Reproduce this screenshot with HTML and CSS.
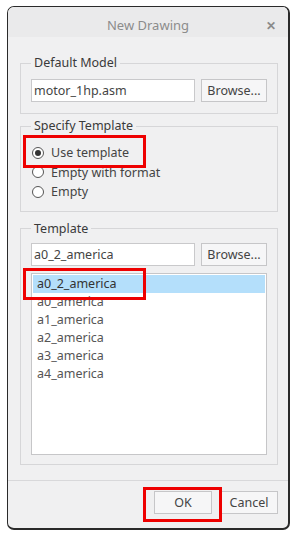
FILE: index.html
```html
<!DOCTYPE html>
<html>
<head>
<meta charset="utf-8">
<link rel="stylesheet" href="styles.css">
</head>
<body>
<div class="window">
  <div class="titlebar">
    <span class="title">New Drawing</span>
    <span class="close">✕</span>
  </div>
  <div class="content">
    <fieldset class="group g1">
      <legend>Default Model</legend>
      <div class="row">
        <div class="input">motor_1hp.asm</div>
        <div class="btn browse">Browse...</div>
      </div>
    </fieldset>
    <fieldset class="group g2">
      <legend>Specify Template</legend>
      <div class="radio"><span class="dot on"></span>Use template</div>
      <div class="radio"><span class="dot"></span>Empty with format</div>
      <div class="radio"><span class="dot"></span>Empty</div>
    </fieldset>
    <fieldset class="group g3">
      <legend>Template</legend>
      <div class="row">
        <div class="input">a0_2_america</div>
        <div class="btn browse">Browse...</div>
      </div>
      <div class="list">
        <div class="item sel">a0_2_america</div>
        <div class="item">a0_america</div>
        <div class="item">a1_america</div>
        <div class="item">a2_america</div>
        <div class="item">a3_america</div>
        <div class="item">a4_america</div>
      </div>
    </fieldset>
  </div>
  <div class="footer">
    <div class="btn action">OK</div>
    <div class="btn action">Cancel</div>
  </div>
  <div class="mark mark-radio"></div>
  <div class="mark mark-item"></div>
  <div class="mark mark-ok"></div>
</div>
</body>
</html>
```
FILE: styles.css
```css
* { box-sizing: border-box; }
html, body { margin: 0; padding: 0; background: #ffffff; }
body {
  font-family: "Noto Sans", "Open Sans", sans-serif;
  font-size: 12px;
  color: #444;
  padding: 6px 0 0 7px;
}
.window {
  position: relative;
  width: 283px;
  height: 524px;
  border: 1px solid #2a2a2a;
  border-bottom-width: 2px;
  border-right-width: 2px;
  border-radius: 7px;
  background: #f0f0f1;
  overflow: hidden;
  display: flex;
  flex-direction: column;
}
.titlebar {
  height: 30px;
  padding-top: 5px;
  background: #eaeaeb;
  display: flex;
  align-items: center;
  justify-content: center;
  position: relative;
  flex: none;
}
.title { color: #8c8c8c; font-size: 13px; }
.close {
  position: absolute;
  right: 12px;
  top: 10px;
  color: #8a8a8a;
  font-size: 12px;
  font-weight: bold;
}
.content {
  padding: 18px 10px 0 12px;
  display: flex;
  flex-direction: column;
  gap: 4px;
  flex: 1;
}
.group {
  margin: 0;
  min-width: 0;
  width: 258px;
  border: 1px solid #d6d6d8;
  padding: 8px 10px 10px 10px;
}
.group legend {
  margin-left: 0;
  padding: 0 3px;
  line-height: 16px;
  color: #3a3a3a;
  font-size: 12.5px;
}
.g1 { padding-top: 8px; padding-bottom: 11px; }
.g2 { padding: 9px 10px 9px 11px; }
.g2 legend { margin-left: -1px; }
.g3 { margin-top: 5px; padding-top: 6px; padding-bottom: 9px; }
.row { display: flex; gap: 6px; }
.input {
  width: 164px;
  height: 23px;
  background: #fff;
  border: 1px solid #c9c9cb;
  padding: 0 2px;
  line-height: 21px;
  color: #444;
  font-size: 12.5px;
}
.btn {
  height: 23px;
  border: 1px solid #c6c6c8;
  background: #f6f6f7;
  display: flex;
  align-items: center;
  justify-content: center;
  color: #444;
  font-size: 12.5px;
}
.browse { width: 66px; }
.radio {
  display: flex;
  align-items: center;
  height: 19.5px;
  font-size: 12.5px;
  color: #444;
}
.dot {
  width: 12px;
  height: 12px;
  border: 1px solid #555;
  border-radius: 50%;
  margin-right: 7px;
  background: #fff;
  display: flex;
  align-items: center;
  justify-content: center;
}
.dot.on::after {
  content: "";
  width: 6px;
  height: 6px;
  border-radius: 50%;
  background: #333;
}
.list {
  margin-top: 7px;
  width: 236px;
  height: 182px;
  border: 1px solid #c6c6c8;
  background: #fff;
  padding: 1px;
}
.item {
  height: 18px;
  line-height: 18px;
  padding-left: 4px;
  color: #555;
  font-size: 12.5px;
}
.item.sel { background: #b4dffb; color: #333; }
.footer {
  flex: none;
  height: 48px;
  border-top: 1px solid #d8d8da;
  display: flex;
  justify-content: flex-end;
  gap: 8px;
  padding: 10px 10px 0 0;
}
.action { width: 58px; }
.mark {
  position: absolute;
  border: 3px solid #ee0000;
}
.mark-radio { left: 15px; top: 128px; width: 123px; height: 33px; }
.mark-item { left: 15px; top: 261px; width: 123px; height: 32px; }
.mark-ok { left: 135px; top: 480px; width: 79px; height: 35px; }
```
